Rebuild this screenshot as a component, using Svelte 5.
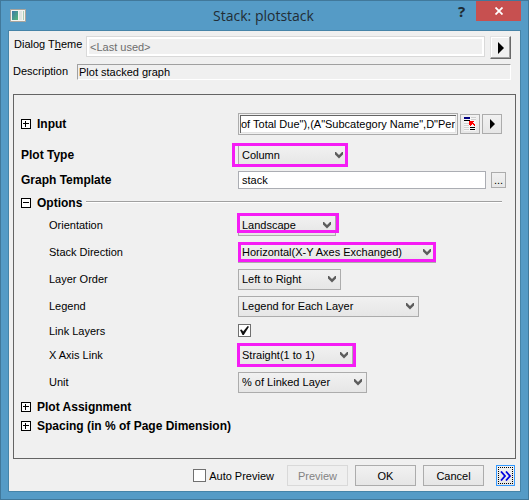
<script>
  let theme = $state('<Last used>');
  let description = $state('Plot stacked graph');
  let input = $state('of Total Due"),(A"Subcategory Name",D"Per');
  let template = $state('stack');
  let linkLayers = $state(true);
  let autoPreview = $state(false);
</script>

{#snippet choice(id, value, size, mark)}
  <span class="choice {size}">
    <select {id}><option>{value}</option></select>
    <svg class="chevron" width="8" height="7" viewBox="0 0 8 7" aria-hidden="true">
      <path d="M0 0h1l3 3 3-3h1v2.500L4 6.500 0 2.500z" fill="#5c5c5c" />
    </svg>
    {#if mark}<span class="mark {mark}"></span>{/if}
  </span>
{/snippet}

{#snippet toggle(open)}
  <svg width="10" height="10" viewBox="0 0 10 10" shape-rendering="crispEdges" aria-hidden="true">
    <path d="M0.500 0.500h9v9h-9z" fill="#fff" stroke="#000" />
    <path d="M2 5h6v-1H2z" fill="#000" />
    {#if !open}<path d="M4 2h1v6H4z" fill="#000" />{/if}
  </svg>
{/snippet}

<div class="window">
  <header>
    <svg class="app" width="16" height="14" viewBox="0 0 16 14" aria-hidden="true">
      <defs>
        <linearGradient id="g" x1="0" y1="0" x2="1" y2="1">
          <stop offset="0" stop-color="#3c78a8" /><stop offset="1" stop-color="#54b878" />
        </linearGradient>
      </defs>
      <path d="M0.500 0.500h15v12h-15z" fill="#f4f4f0" stroke="#a8a49c" />
      <path d="M2 2h6v9H2z" fill="url(#g)" />
      <path d="M9 2h3v9H9z" fill="#dfe6e2" />
      <path d="M13 2h1v9h-1z" fill="#a9cdb8" />
    </svg>
    <h1>Stack: plotstack</h1>
    <button class="help" aria-label="Help">?</button>
    <button class="close" aria-label="Close">
      <svg width="8" height="8" viewBox="0 0 8 8"><path d="M0.500 0.500l7 7M7.500 0.500l-7 7" stroke="#fff" stroke-width="1.800" /></svg>
    </button>
  </header>

  <main>
    <div class="top theme">
      <label for="theme">Dialog T<u>h</u>eme</label>
      <input id="theme" bind:value={theme} readonly />
      <button class="raised" aria-label="Theme menu">
        <svg width="6" height="12" viewBox="0 0 6 12"><path d="M0 0l6 6-6 6z" /></svg>
      </button>
    </div>
    <div class="top desc">
      <label for="desc">Description</label>
      <input id="desc" bind:value={description} readonly />
    </div>

    <section>
      <div class="row source">
        <label class="head" for="input">{@render toggle(false)}Input</label>
        <input id="input" bind:value={input} />
        <button class="tool" aria-label="Select data">
          <svg width="12" height="14" viewBox="0 0 12 14" shape-rendering="crispEdges">
            <path d="M0 0h12v14H0z" fill="#f6f6f6" />
            <path d="M7 0h5v1H7zM7 2h5v1H7zM0 6h5v1H0zM0 8h5v1H0zM0 10h5v1H0zM0 12h5v1H0z" fill="#cfcfcf" />
            <path d="M0 0h6v2H0z" fill="#000080" />
            <path d="M0 3h6v1H0zM6 10h5v1H6zM6 12h5v1H6z" fill="#000" />
            <path d="M5 4h5v1H9v1h1v1h1v2h-1v-1H9v-1H8v1H7v1H6V8H5z" fill="#f00" />
          </svg>
        </button>
        <button class="tool" aria-label="Input menu">
          <svg width="5" height="10" viewBox="0 0 5 10"><path d="M0 0l5 5-5 5z" /></svg>
        </button>
      </div>
      <div class="row plot">
        <label class="head" for="plot">Plot Type</label>
        {@render choice('plot', 'Column', 'w110', 'm-plot')}
      </div>
      <div class="row template">
        <label class="head" for="template">Graph Template</label>
        <input id="template" bind:value={template} />
        <button class="more">...</button>
      </div>
      <div class="options head">{@render toggle(true)}Options<hr /></div>

      <div class="list">
        <div class="row">
          <label for="orient">Orientation</label>
          {@render choice('orient', 'Landscape', 'w98', 'm-orient')}
        </div>
        <div class="row">
          <label for="dir">Stack Direction</label>
          {@render choice('dir', 'Horizontal(X-Y Axes Exchanged)', 'w198', 'm-dir')}
        </div>
        <div class="row">
          <label for="order">Layer Order</label>
          {@render choice('order', 'Left to Right', 'w103', '')}
        </div>
        <div class="row">
          <label for="legend">Legend</label>
          {@render choice('legend', 'Legend for Each Layer', 'w181', '')}
        </div>
        <div class="row short">
          <label for="link">Link Layers</label>
          <input id="link" type="checkbox" bind:checked={linkLayers} />
        </div>
        <div class="row">
          <label for="axis">X Axis Link</label>
          {@render choice('axis', 'Straight(1 to 1)', 'w115', 'm-axis')}
        </div>
        <div class="row">
          <label for="unit">Unit</label>
          {@render choice('unit', '% of Linked Layer', 'w129', '')}
        </div>
      </div>
      <div class="head group">{@render toggle(false)}Plot Assignment</div>
      <div class="head group">{@render toggle(false)}Spacing (in % of Page Dimension)</div>
    </section>

    <footer>
      <label class="auto"><input type="checkbox" bind:checked={autoPreview} />Auto Preview</label>
      <button class="action" disabled>Preview</button>
      <button class="action">OK</button>
      <button class="action">Cancel</button>
      <button class="expand" aria-label="Expand">
        <svg width="12" height="10" viewBox="0 0 12 10"><path d="M1 0.500l4 4.500-4 4.500M6 0.500l4 4.500-4 4.500" fill="none" stroke="#0000e0" stroke-width="1.800" /></svg>
      </button>
    </footer>
  </main>
</div>

<style>
  .window, .window * { box-sizing: border-box; }
  .window {
    min-height: 100vh;
    display: flex;
    flex-direction: column;
    padding: 0 7px 7px;
    background: #559bc6;
    border: 1px solid #41789a;
    font: 11px/16px "Liberation Sans", Arial, sans-serif;
    color: #000;
  }
  input, select, button { font: inherit; color: inherit; margin: 0; border-radius: 0; }
  button { display: flex; align-items: center; justify-content: center; padding: 0; background: linear-gradient(#f1f1f1, #e6e6e6); border: 1px solid #acacac; }
  header { display: flex; height: 29px; align-items: flex-start; }
  .app { margin: 8px 0 0 2px; flex: none; }
  h1 { flex: 1; margin: 0; padding: 5px 0 0 53px; text-align: center; font: 14px/20px "Open Sans", "Noto Sans", sans-serif; color: #222d35; }
  header button { border: 0; height: 20px; }
  .help { width: 27px; background: none; font: bold 15px/20px "Noto Sans", sans-serif; color: #1e2b35; }
  .close { width: 45px; margin-left: 1px; background: #c75050; }
  main { flex: 1; display: flex; flex-direction: column; padding: 5px 4px 5px; background: #f0f0f0; border: 1px solid #4684a8; }
  .top { display: flex; }
  .top label { flex: none; white-space: nowrap; }
  .theme { padding-right: 5px; }
  .theme label { width: 73px; padding-left: 1px; }
  .theme input { flex: 1; min-width: 0; height: 21px; padding: 0 1px; background: #f0f0f0; color: #6d6d6d; border: 1px solid #d9d9d9; box-shadow: inset 0 0 0 2px #fff; text-indent: 2px; }
  .raised { width: 21px; height: 23px; margin-left: 5px; background: #f0f0f0; border-color: #e3e3e3 #696969 #696969 #e3e3e3; box-shadow: inset -1px -1px #a0a0a0, inset 1px 1px #fff; }
  .desc { padding: 5px 5px 0 0; }
  .desc label { width: 64px; margin-top: -1px; }
  .desc input { flex: 1; min-width: 0; height: 16px; padding: 0 1px; background: #f0f0f0; border: 1px solid; border-color: #a0a0a0 #fff #fff #a0a0a0; }
  section { flex: 1; margin-top: 14px; padding: 17px 13px 0 7px; border: 1px solid #646464; }
  .row { display: flex; align-items: center; height: 22px; }
  .row > label { width: 217px; flex: none; }
  .head { display: flex; align-items: center; font-weight: bold; font-size: 12px; }
  .head :global(svg) { margin-right: 6px; flex: none; }
  .source { height: 24px; }
  .source input { flex: 1; min-width: 0; height: 22px; padding: 0 2px; border: 1px solid #acacac; box-shadow: inset 0 0 0 1px #f0f0f0, inset 2px 2px #646464, inset -2px -2px #e3e3e3; }
  .tool { width: 20px; height: 20px; margin-left: 2px; }
  .plot { margin-top: 8px; }
  .template { height: 18px; margin-top: 5px; }
  .template input { flex: 1; min-width: 0; height: 18px; padding: 0 3px; border: 1px solid #abadb3; }
  .more { width: 15px; height: 16px; margin: 0 -4px 0 5px; }
  .options { height: 16px; margin-top: 6px; }
  hr { flex: 1; height: 2px; margin: 0 0 3px 4px; border: 0; border-top: 1px solid #a0a0a0; background: #fff; }
  .list { display: flex; flex-direction: column; gap: 5px; margin: 3px 0 4px; }
  .list label { padding-left: 28px; }
  .list .short { height: 17px; }
  .group { height: 19px; }
  .choice { position: relative; height: 21px; }
  .choice select { display: block; width: 100%; height: 21px; appearance: none; padding: 0 3px; background: linear-gradient(#f1f1f1, #e6e6e6); border: 1px solid #acacac; }
  .chevron { position: absolute; right: 5px; top: 7px; pointer-events: none; }
  .w98 { width: 98px; }
  .w103 { width: 103px; }
  .w110 { width: 110px; }
  .w115 { width: 115px; }
  .w129 { width: 129px; }
  .w181 { width: 181px; }
  .w198 { width: 198px; }
  .mark { position: absolute; border: 3px solid #f51cf5; pointer-events: none; }
  .m-plot { inset: -2px 0 -1px -6px; }
  .m-orient { inset: -2px -3px 3px -1px; }
  .m-dir { inset: 0 0 1px 0; }
  .m-axis { inset: -2px -3px -1px -1px; }
  input[type="checkbox"] { appearance: none; width: 13px; height: 13px; border: 1px solid #707070; background: #fff; }
  input[type="checkbox"]:checked::before { content: ""; display: block; width: 9px; height: 9px; margin: 1px; background: #111; clip-path: polygon(0 45%, 18% 40%, 35% 62%, 85% 0, 100% 8%, 42% 100%, 28% 100%); }
  footer { display: flex; align-items: center; justify-content: flex-end; gap: 7px; height: 21px; margin-top: 6px; padding-right: 1px; }
  .auto { display: flex; align-items: center; gap: 3px; margin-right: 6px; }
  .action { width: 61px; height: 21px; }
  .action:disabled { color: #838383; background: #efefef; border-color: #d9d9d9; }
  .expand { width: 19px; height: 21px; margin-left: 5px; border-color: #3399ff; outline: 1px dotted #000; outline-offset: -3px; }
</style>
